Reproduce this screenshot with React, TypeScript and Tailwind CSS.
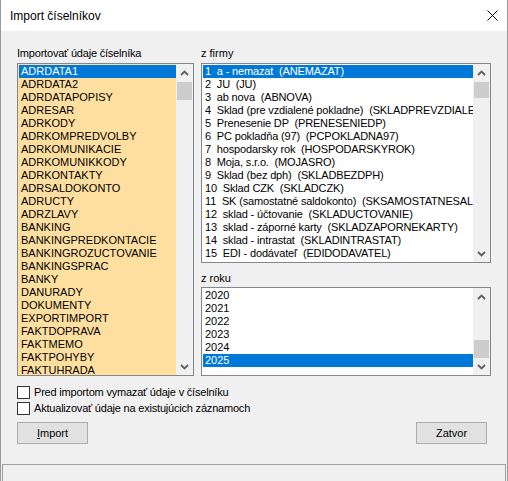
import React from 'react';

const tables = [
  'ADRDATA1', 'ADRDATA2', 'ADRDATAPOPISY', 'ADRESAR', 'ADRKODY', 'ADRKOMPREDVOLBY',
  'ADRKOMUNIKACIE', 'ADRKOMUNIKKODY', 'ADRKONTAKTY', 'ADRSALDOKONTO', 'ADRUCTY', 'ADRZLAVY',
  'BANKING', 'BANKINGPREDKONTACIE', 'BANKINGROZUCTOVANIE', 'BANKINGSPRAC', 'BANKY', 'DANURADY',
  'DOKUMENTY', 'EXPORTIMPORT', 'FAKTDOPRAVA', 'FAKTMEMO', 'FAKTPOHYBY', 'FAKTUHRADA',
];

const firms = [
  '1  a - nemazat  (ANEMAZAT)',
  '2  JU  (JU)',
  '3  ab nova  (ABNOVA)',
  '4  Sklad (pre vzdialené pokladne)  (SKLADPREVZDIALE',
  '5  Prenesenie DP  (PRENESENIEDP)',
  '6  PC pokladňa (97)  (PCPOKLADNA97)',
  '7  hospodarsky rok  (HOSPODARSKYROK)',
  '8  Moja, s.r.o.  (MOJASRO)',
  '9  Sklad (bez dph)  (SKLADBEZDPH)',
  '10  Sklad CZK  (SKLADCZK)',
  '11  SK (samostatné saldokonto)  (SKSAMOSTATNESAL',
  '12  sklad - účtovanie  (SKLADUCTOVANIE)',
  '13  sklad - záporné karty  (SKLADZAPORNEKARTY)',
  '14  sklad - intrastat  (SKLADINTRASTAT)',
  '15  EDI - dodávateľ  (EDIDODAVATEL)',
];

const years = ['2020', '2021', '2022', '2023', '2024', '2025'];

const Chevron = ({ down }: { down?: boolean }) => (
  <svg width="9" height="6" viewBox="0 0 9 6" className="block">
    <polyline
      points={down ? '1,1 4.5,4.5 8,1' : '1,5 4.5,1.5 8,5'}
      fill="none"
      stroke="#606060"
      strokeWidth="1.8"
    />
  </svg>
);

interface ListBoxProps {
  items: string[];
  selected: number;
  bg: string;
  height: string;
  thumb: string; // classes for thumb offset/height
  tight?: boolean;
}

const ListBox: React.FC<ListBoxProps> = ({ items, selected, bg, height, thumb, tight }) => (
  <div className={`${height} ${bg} border border-[#828790] flex overflow-hidden`}>
    <div className="flex-1 min-w-0 pl-px pt-px overflow-hidden">
      {items.map((item, i) => (
        <div
          key={item}
          className={`h-[13px] leading-[13px] pl-[2px] whitespace-pre overflow-hidden ${
            tight ? 'tracking-[-0.15px]' : ''
          } ${i === selected ? 'bg-[#0078d7] text-white' : 'text-black'}`}
        >
          {item}
        </div>
      ))}
    </div>
    <div className="w-[17px] shrink-0 bg-[#f0f0f0] flex flex-col">
      <div className="h-[17px] flex items-center justify-center">
        <Chevron />
      </div>
      <div className="flex-1 flex flex-col">
        <div className={`bg-[#cdcdcd] mx-px ${thumb}`} />
      </div>
      <div className="h-[17px] flex items-center justify-center">
        <Chevron down />
      </div>
    </div>
  </div>
);

const Checkbox = ({ label }: { label: string }) => (
  <div className="flex items-center h-[13px] gap-[4px]">
    <div className="w-[13px] h-[13px] bg-white border border-[#333333]" />
    <span className="leading-[13px] tracking-[-0.2px]">{label}</span>
  </div>
);

export default function App() {
  return (
    <div
      className="w-[508px] h-[481px] flex flex-col bg-[#f0f0f0] border-x border-[#9a9a9a] text-[11px] text-black"
      style={{ fontFamily: '"Liberation Sans", Arial, sans-serif' }}
    >
      {/* Title bar */}
      <div className="h-[31px] bg-white flex items-center justify-between pl-[9px] pr-[9px] shrink-0">
        <span className="text-[12px]">Import číselníkov</span>
        <svg width="11" height="11" viewBox="0 0 11 11">
          <path d="M0.5 0.5 L10.5 10.5 M10.5 0.5 L0.5 10.5" stroke="#000" strokeWidth="1" />
        </svg>
      </div>

      <div className="flex-1 flex flex-col pl-[16px]">
        <div className="flex gap-[7px] pt-[16px]">
          {/* Left column */}
          <div className="w-[177px] flex flex-col">
            <div className="h-[13px] leading-[13px] mb-[3px] tracking-[-0.2px]">Importovať údaje číselníka</div>
            <ListBox items={tables} selected={0} bg="bg-[#ffdfa0]" height="h-[313px]" thumb="mt-px h-[18px]" />
          </div>

          {/* Right column */}
          <div className="w-[290px] flex flex-col">
            <div className="h-[13px] leading-[13px] mb-[3px]">z firmy</div>
            <ListBox items={firms} selected={0} bg="bg-white" height="h-[200px]" thumb="mt-px h-[16px]" tight />
            <div className="h-[13px] leading-[13px] mt-[9px] mb-[2px]">z roku</div>
            <ListBox items={years} selected={5} bg="bg-white" height="h-[89px]" thumb="mt-auto h-[18px]" />
          </div>
        </div>

        <div className="flex flex-col gap-[3px] mt-[10px]">
          <Checkbox label="Pred importom vymazať údaje v číselníku" />
          <Checkbox label="Aktualizovať údaje na existujúcich záznamoch" />
        </div>

        <div className="w-[470px] flex justify-between mt-[7px]">
          <button className="w-[71px] h-[22px] bg-[#e1e1e1] border border-[#adadad] flex items-center justify-center">
            <span>
              <span className="underline">I</span>mport
            </span>
          </button>
          <button className="w-[71px] h-[22px] bg-[#e1e1e1] border border-[#adadad] flex items-center justify-center">
            Zatvor
          </button>
        </div>

        <div className="mt-auto -ml-[15px] mr-px h-[17px] border-t border-x border-[#a0a0a0]" />
      </div>
    </div>
  );
}
